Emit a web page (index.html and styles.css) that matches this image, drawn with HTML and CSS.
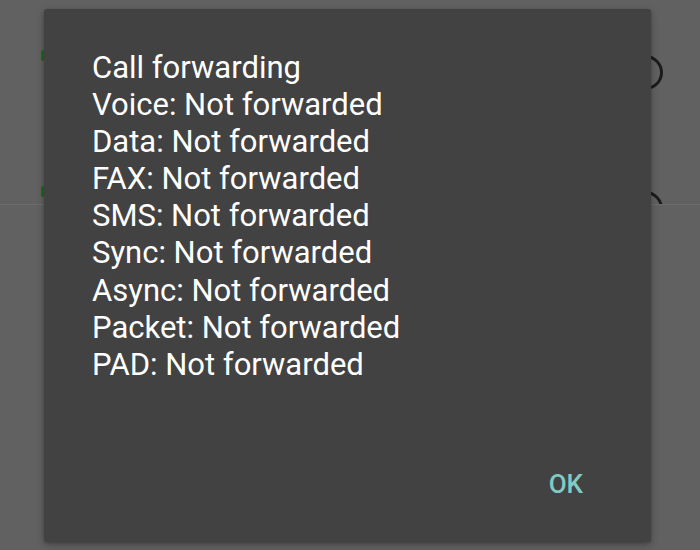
FILE: index.html
```html
<!DOCTYPE html>
<html>
<head>
<meta charset="utf-8">
<link rel="stylesheet" href="styles.css">
</head>
<body>
<div class="screen">
  <div class="list">
    <div class="row">
      <span class="mark"></span>
      <span class="radio"></span>
    </div>
    <div class="row">
      <span class="mark"></span>
      <span class="radio"></span>
    </div>
  </div>
  <div class="lower"></div>

  <div class="dialog">
    <div class="message">
      <div>Call forwarding</div>
      <div>Voice: Not forwarded</div>
      <div>Data: Not forwarded</div>
      <div>FAX: Not forwarded</div>
      <div>SMS: Not forwarded</div>
      <div>Sync: Not forwarded</div>
      <div>Async: Not forwarded</div>
      <div>Packet: Not forwarded</div>
      <div>PAD: Not forwarded</div>
    </div>
    <div class="actions">
      <button class="ok">OK</button>
    </div>
  </div>
</div>
</body>
</html>
```
FILE: styles.css
```css
html, body {
  margin: 0;
  padding: 0;
}
body {
  background: #616161;
  font-family: Roboto, "Noto Sans", sans-serif;
}
.screen {
  position: relative;
  width: 700px;
  height: 550px;
  overflow: hidden;
}
.list {
  height: 200px;
  padding-top: 4px;
  overflow: hidden;
  border-bottom: 1px solid #6c6c6c;
  box-sizing: content-box;
}
.row {
  position: relative;
  height: 136px;
  display: flex;
  align-items: center;
  justify-content: flex-end;
  padding-right: 37px;
}
.mark {
  position: absolute;
  left: 41px;
  top: 46px;
  width: 3px;
  height: 11px;
  border-radius: 2px;
  background: #1f6b1f;
}
.radio {
  width: 29px;
  height: 29px;
  border: 3px solid #1c1c1c;
  border-radius: 50%;
}
.lower {
  height: 345px;
  background: #616161;
}
.dialog {
  position: absolute;
  left: 44px;
  top: 9px;
  width: 607px;
  height: 533px;
  background: #424242;
  border-radius: 3px;
  box-shadow: 0 3px 8px rgba(0,0,0,0.25), 0 1px 3px rgba(0,0,0,0.2);
  display: flex;
  flex-direction: column;
  box-sizing: border-box;
  padding: 40px 0 0 48px;
}
.message {
  color: #ffffff;
  font-size: 31px;
  line-height: 37.1px;
  flex: 1;
}
.actions {
  display: flex;
  justify-content: flex-end;
  padding: 0 56px 40px 0;
}
.ok {
  background: none;
  border: none;
  padding: 0 12px;
  font-family: Roboto, "Noto Sans", sans-serif;
  font-size: 26px;
  font-weight: 500;
  color: #80cbc4;
  line-height: 36px;
}
```
